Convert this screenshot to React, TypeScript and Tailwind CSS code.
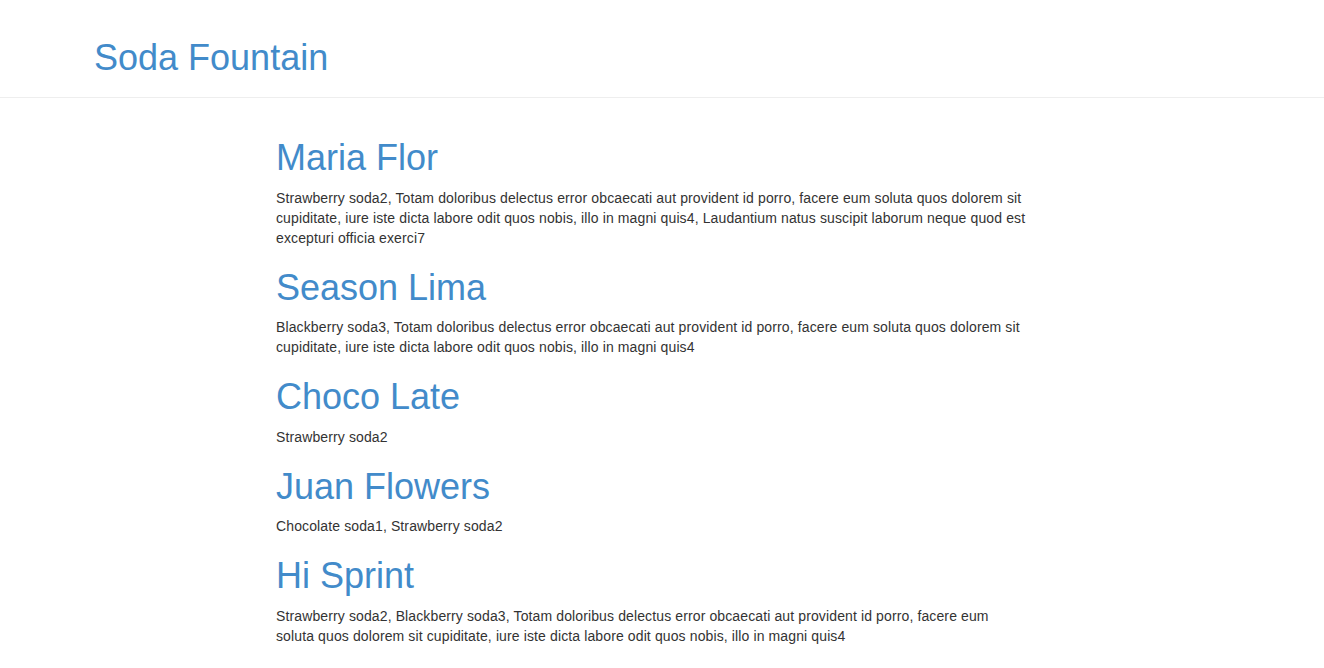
const entries = [
    {
        name: "Maria Flor",
        sodas:
            "Strawberry soda2, Totam doloribus delectus error obcaecati aut provident id porro, facere eum soluta quos dolorem sit cupiditate, iure iste dicta labore odit quos nobis, illo in magni quis4, Laudantium natus suscipit laborum neque quod est excepturi officia exerci7",
    },
    {
        name: "Season Lima",
        sodas:
            "Blackberry soda3, Totam doloribus delectus error obcaecati aut provident id porro, facere eum soluta quos dolorem sit cupiditate, iure iste dicta labore odit quos nobis, illo in magni quis4",
    },
    { name: "Choco Late", sodas: "Strawberry soda2" },
    { name: "Juan Flowers", sodas: "Chocolate soda1, Strawberry soda2" },
    {
        name: "Hi Sprint",
        sodas:
            "Strawberry soda2, Blackberry soda3, Totam doloribus delectus error obcaecati aut provident id porro, facere eum soluta quos dolorem sit cupiditate, iure iste dicta labore odit quos nobis, illo in magni quis4",
    },
];

const App = () => {
    return (
        <div className="min-h-screen bg-white font-['Liberation_Sans',Arial,sans-serif] text-[14px] leading-[20px] text-[#333]">

            <header className="h-[98px] border-b border-[#eee] pl-[94px] pt-[38px]">
                <h1 className="text-[36px] leading-[40px] text-[#428bca]">
                    Soda Fountain
                </h1>
            </header>

            <main className="pl-[276px] pt-[20px]">
                <div className="w-[750px]">
                    {entries.map((entry) => (
                        <div key={entry.name}>
                            <h1 className="mt-[20px] mb-[10px] text-[36px] leading-[1.1] text-[#428bca]">
                                {entry.name}
                            </h1>
                            <p className="mb-[10px] tracking-[0.12px]">
                                {entry.sodas}
                            </p>
                        </div>
                    ))}
                </div>
            </main>

        </div>
    );
};

export default App;
